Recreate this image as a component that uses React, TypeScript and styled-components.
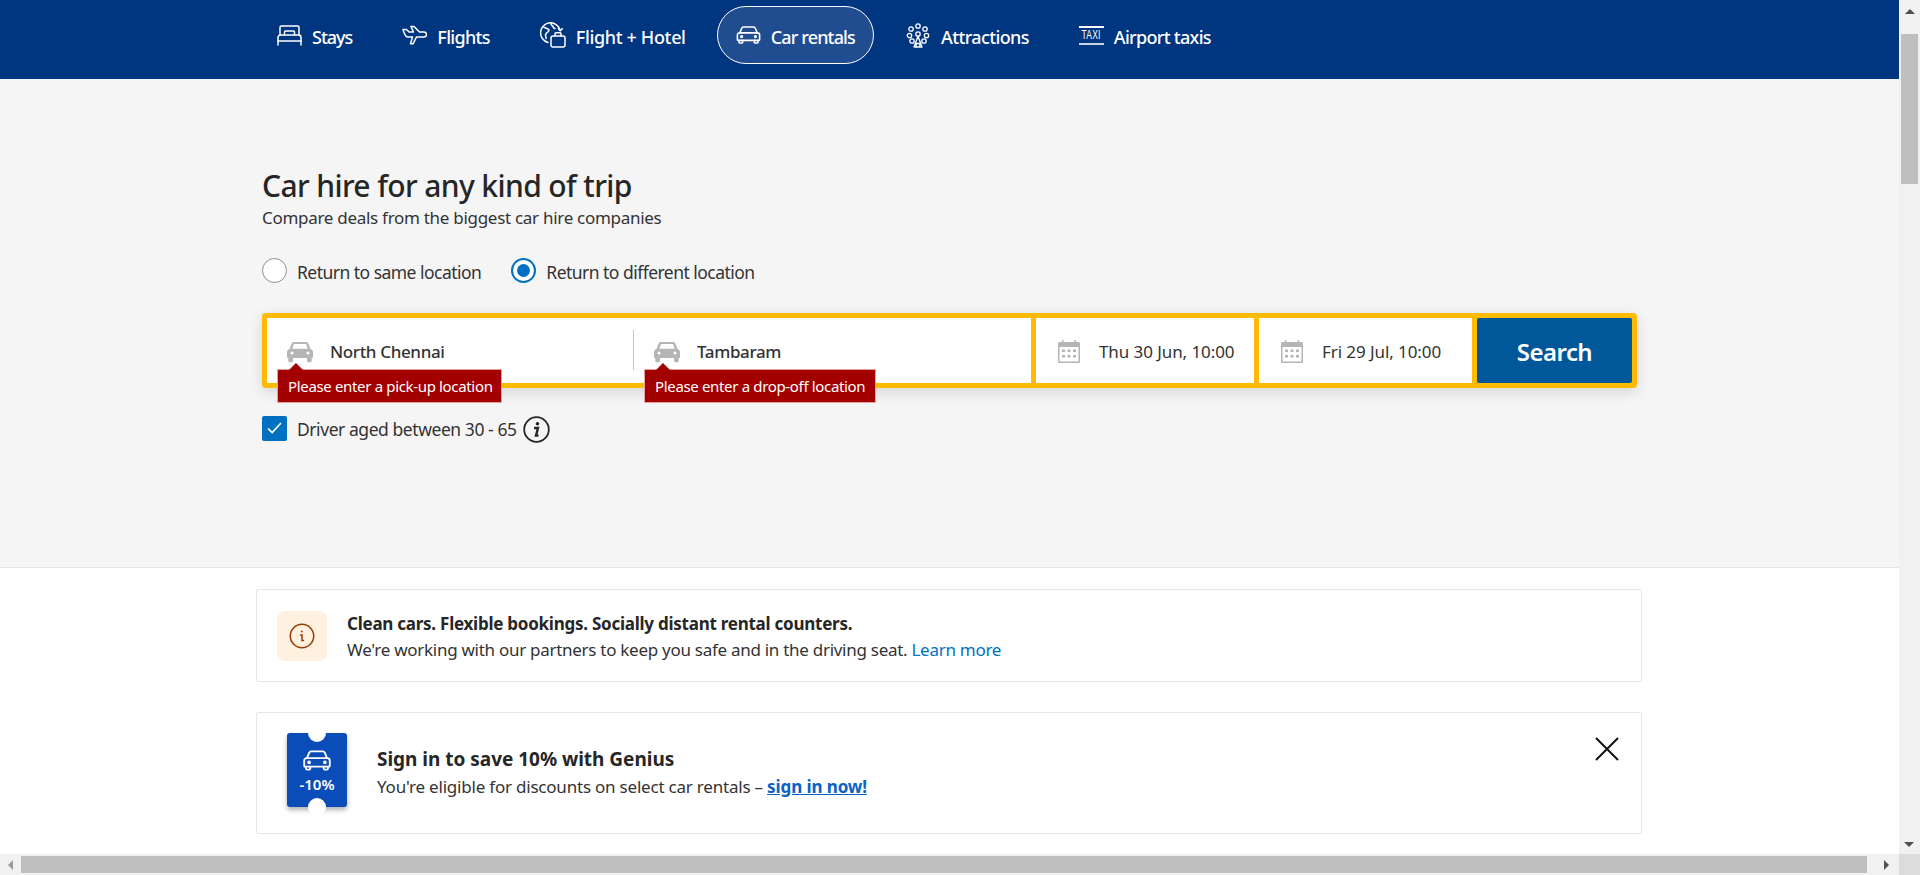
import React from 'react';
import styled, { createGlobalStyle } from 'styled-components';

const Global = createGlobalStyle`
  html, body { margin: 0; padding: 0; height: 100%; overflow: hidden; background: #fff; }
  * { box-sizing: border-box; }
  body { font-family: "Noto Sans", "Open Sans", "Liberation Sans", sans-serif; color: #262626; }
`;

const Frame = styled.div`
  width: 1920px; height: 875px; display: grid;
  grid-template-columns: 1899px 21px; grid-template-rows: 854px 21px;
`;
const Viewport = styled.main`overflow: hidden; background: #fff;`;
const VBar = styled.div`
  background: #f1f1f1; display: flex; flex-direction: column; align-items: center; padding-top: 9px; position: relative;
`;
const HBar = styled.div`
  background: #f1f1f1; display: flex; align-items: center; border-top: 2px solid #f1f1f1; border-bottom: 2px solid #f1f1f1;
`;
const Corner = styled.div`background: #dcdcdc;`;
const Thumb = styled.div<{ $v?: boolean }>`
  background: #bfbfbf;
  ${p => p.$v ? 'width: 17px; height: 150px; margin-top: 20px;' : 'height: 17px; width: 1846px;'}
`;
const ArrowV = styled.span<{ $down?: boolean }>`
  width: 0; height: 0; border-left: 5px solid transparent; border-right: 5px solid transparent;
  ${p => p.$down
    ? 'border-top: 5px solid #505050; position: absolute; bottom: 7px; left: 5px;'
    : 'border-bottom: 5px solid #505050;'}
`;
const ArrowH = styled.span<{ $right?: boolean }>`
  width: 0; height: 0; border-top: 5px solid transparent; border-bottom: 5px solid transparent; flex: none;
  ${p => p.$right
    ? 'border-left: 5px solid #505050; margin-left: 17px;'
    : 'border-right: 5px solid #9a9a9a; margin: 0 8px;'}
`;

const Header = styled.header`
  height: 79px; background: #003580; padding: 6px 0 0 258px; display: flex; gap: 12px; align-items: flex-start;
`;
const NavItem = styled.a<{ $active?: boolean }>`
  height: 58px; padding: 0 18px; display: flex; align-items: center; gap: 10px;
  border-radius: 29px; color: #fff; font-size: 18px; font-weight: 500;
  border: 1px solid ${p => p.$active ? '#fff' : 'transparent'};
  background: ${p => p.$active ? 'rgba(255,255,255,.12)' : 'transparent'};
  svg { display: block; flex: none; }
`;
const NavLabel = styled.span<{ $ls: number }>`margin-top: 4px; letter-spacing: ${p => p.$ls}px;`;
const TaxiMark = styled.span`
  width: 25px; height: 19px; border-top: 2px solid #fff; border-bottom: 2px solid #c9d4e6; color: #fff;
  display: flex; align-items: center; justify-content: center; flex: none; overflow: hidden; margin-top: 1px;
`;
const TaxiLetters = styled.span`
  font: 400 12.5px/1 "Liberation Sans", sans-serif; letter-spacing: 0.3px; transform: scaleX(.68);
`;

const Hero = styled.section`
  height: 489px; background: #f5f5f5; border-bottom: 1px solid #e6e6e6; padding: 84px 0 0 262px;
`;
const Title = styled.h1`
  margin: 0; font-size: 30px; line-height: 46px; font-weight: 500; color: #262626; letter-spacing: -0.62px;
`;
const Subtitle = styled.p`
  margin: -2px 0 0; font-size: 17px; line-height: 22px; color: #333; letter-spacing: -0.29px;
`;
const RadioRow = styled.div`display: flex; margin-top: 29px; height: 25px;`;
const RadioOption = styled.label`
  display: flex; align-items: center; gap: 10px; font-size: 17.5px; letter-spacing: -0.53px; color: #333; margin-right: 30px;
`;
const OptionText = styled.span`margin-top: 2px;`;
const RadioCircle = styled.span<{ $on?: boolean }>`
  width: 25px; height: 25px; border-radius: 50%; background: #fff; flex: none; display: flex; align-items: center; justify-content: center;
  border: ${p => p.$on ? '2px solid #0071c2' : '1px solid #8e8e8e'};
  &::after { content: ''; width: 13px; height: 13px; border-radius: 50%; background: ${p => p.$on ? '#0071c2' : 'transparent'}; }
`;
const SearchBox = styled.div`
  margin-top: 30px; width: 1375px; height: 75px; background: #febb02; border-radius: 4px; padding: 5px; display: flex; gap: 5px;
  box-shadow: 0 4px 14px rgba(0,0,0,.13);
`;
const LocationGroup = styled.div`width: 764px; background: #fff; display: flex; align-items: stretch;`;
const LocationField = styled.div<{ $w: number; $divider?: boolean }>`
  width: ${p => p.$w}px; position: relative; display: flex; align-items: center; gap: 17px; padding: 2px 0 0 20px;
  font-size: 17px; font-weight: 500; letter-spacing: -0.36px; color: #333;
  ${p => p.$divider ? `&::after { content: ''; position: absolute; right: 0; top: 12px; height: 40px; width: 1px; background: #c4c4c4; }` : ''}
`;
const Tooltip = styled.div<{ $w: number }>`
  position: absolute; left: 10px; top: 51px; width: ${p => p.$w}px; height: 34px; background: #a30000; border: 1px solid #e5a0a0; border-radius: 1px;
  color: #fff; font-size: 15px; font-weight: 400; letter-spacing: -0.34px; padding-left: 10px; display: flex; align-items: center; z-index: 2; white-space: nowrap;
  &::before { content: ''; position: absolute; left: 11px; top: -7px; width: 0; height: 0; border-left: 7px solid transparent; border-right: 7px solid transparent; border-bottom: 7px solid #a30000; }
`;
const DateField = styled.div<{ $w: number }>`
  width: ${p => p.$w}px; background: #fff; display: flex; align-items: center; gap: 19px; padding: 2px 0 0 22px;
  font-size: 17px; letter-spacing: -0.08px; color: #333; white-space: nowrap;
`;
const SearchButton = styled.button`
  width: 155px; border: 0; border-radius: 2px; background: #00589b; color: #fff; font: 600 24px "Noto Sans", sans-serif; letter-spacing: -0.55px; padding: 2px 0 0;
`;
const DriverRow = styled.div`
  margin-top: 26px; display: flex; align-items: center; gap: 10px; font-size: 17.5px; letter-spacing: -0.44px; color: #333; height: 28px;
`;
const DriverInfo = styled.span`margin: 2px 0 0 -4px; display: block; height: 27px;`;
const Check = styled.span`
  width: 25px; height: 25px; background: #0071c2; border-radius: 2px; display: flex; align-items: center; justify-content: center; flex: none;
`;

const Cards = styled.section`padding: 21px 0 0 256px;`;
const Card = styled.article<{ $h: number; $pad: number; $gap: number }>`
  width: 1386px; height: ${p => p.$h}px; border: 1px solid #e6e6e6; border-radius: 2px; background: #fff; position: relative;
  display: flex; align-items: center; padding-left: ${p => p.$pad}px; gap: ${p => p.$gap}px; margin-bottom: 30px;
`;
const CardBody = styled.div<{ $lh: number; $top: number }>`
  line-height: ${p => p.$lh}px; padding-top: ${p => p.$top}px;
`;
const InfoTile = styled.div`
  width: 50px; height: 50px; border-radius: 8px; background: #fff0e0; display: flex; align-items: center; justify-content: center; flex: none;
`;
const CardTitle = styled.div<{ $large?: boolean }>`
  font-size: ${p => p.$large ? '19px' : '17px'}; font-weight: 700;
  letter-spacing: ${p => p.$large ? '-0.02px' : '-0.25px'}; color: #262626;
`;
const CardText = styled.div<{ $ls: number }>`font-size: 17px; letter-spacing: ${p => p.$ls}px; color: #333;`;
const LearnLink = styled.a`color: #0071c2;`;
const SignInLink = styled.a`color: #0a62c4; font-weight: 700; text-decoration: underline; letter-spacing: -0.1px;`;
const Ticket = styled.div`
  width: 60px; height: 74px; background: #0a4cb8; border-radius: 3px; position: relative; flex: none; color: #fff; margin-bottom: 6px;
  display: flex; flex-direction: column; align-items: center; padding-top: 17px; gap: 5px;
  box-shadow: 0 3px 5px rgba(0,0,0,.3);
  font-size: 15px; font-weight: 600; letter-spacing: 0;
  &::before, &::after { content: ''; position: absolute; left: 21px; width: 18px; height: 18px; border-radius: 50%; background: #fff; }
  &::before { top: -9px; } &::after { bottom: -9px; }
`;
const TicketLabel = styled.span`line-height: 16px;`;
const CloseBtn = styled.button`
  position: absolute; right: 22px; top: 24px; width: 24px; height: 24px; padding: 0; border: 0; background: none; display: block;
`;

const Ic = { fill: 'none', stroke: '#fff', strokeWidth: 1.5, strokeLinecap: 'round' as const, strokeLinejoin: 'round' as const };

const BedIcon = () => (
  <svg width="25" height="21" viewBox="0 0 25 21" {...Ic}>
    <path d="M3 10V2.500A1.500 1.500 0 0 1 4.500 1h16A1.500 1.500 0 0 1 22 2.500V10" />
    <path d="M7.500 10V7a1 1 0 0 1 1-1h8a1 1 0 0 1 1 1v3" />
    <path d="M1 20v-7.500A2.500 2.500 0 0 1 3.500 10h18a2.500 2.500 0 0 1 2.500 2.500V20" />
    <path d="M1 16h23" />
  </svg>
);
const PlaneIcon = () => (
  <svg width="25" height="20" viewBox="0 0 25 20" {...Ic}>
    <path d="M1 4.500h3.500L7 7h4.500L9 1.500h3l5.500 5.500h4.500a2.400 2.400 0 0 1 0 5H14.500l-3.500 6.800H8.500L10.500 12H5.500C3.500 12 2.500 9.500 1 4.500z" />
  </svg>
);
const GlobeBagIcon = () => (
  <svg width="26" height="26" viewBox="0 0 26 26" {...Ic}>
    <path d="M8 20.500A10 10 0 1 1 20.300 8.500" />
    <path d="M18.300 6.800l2 2 2-2" />
    <path d="M3 4.500c2 2 5.500 1.500 6 3.500s-3.500 2-3.500 5c0 1.500 1 2 .5 3.500" />
    <path d="M11 1c-.5 2 1.500 2.500 2 3.500s.5 2 2 2" />
    <rect x="11" y="14" width="14" height="11" rx="2" />
    <path d="M15 14v-2.200a1 1 0 0 1 1-1h4a1 1 0 0 1 1 1V14" />
  </svg>
);
const CarIcon = ({ w = 25, h = 18 }: { w?: number; h?: number }) => (
  <svg width={w} height={h} viewBox="0 0 23 17" {...Ic}>
    <path d="M3.300 6.500 5 2.300A2 2 0 0 1 6.800 1h9.400A2 2 0 0 1 18 2.300l1.700 4.200" />
    <path d="M3 6.500h17a2 2 0 0 1 2 2V13a.6.6 0 0 1-.6.6H1.600A.6.6 0 0 1 1 13V8.500a2 2 0 0 1 2-2z" />
    <path d="M2.500 13.600V15a1 1 0 0 0 1 1h1.500a1 1 0 0 0 1-1v-1.400M17 13.600V15a1 1 0 0 0 1 1h1.500a1 1 0 0 0 1-1v-1.400" />
    <circle cx="5" cy="10" r=".8" /><circle cx="18" cy="10" r=".8" />
  </svg>
);
const FerrisIcon = () => (
  <svg width="26" height="25" viewBox="0 0 26 25" {...Ic} strokeWidth={1.3}>
    <circle cx="13" cy="3" r="2.200" /><circle cx="6" cy="6" r="2.200" /><circle cx="20" cy="6" r="2.200" />
    <circle cx="4.500" cy="12.500" r="2.200" /><circle cx="21.500" cy="12.500" r="2.200" />
    <circle cx="7" cy="18" r="2.200" /><circle cx="19" cy="18" r="2.200" /><circle cx="13" cy="11" r="2.200" />
    <path d="M13 13.200 9 24h8zM11.200 24v-3.500h3.600V24" />
  </svg>
);
const SolidCar = () => (
  <svg width="26" height="22" viewBox="0 0 26 22" style={{ flex: 'none', display: 'block' }}>
    <path fill="#b5b5b5" d="M6.800 1h12.400c1 0 1.800.6 2.200 1.500L23.500 8c1.500.5 2.500 1.600 2.500 3.200V16c0 .5-.4 1-1 1h-.3v3c0 .7-.5 1.200-1.200 1.200h-2.300c-.7 0-1.200-.5-1.200-1.200v-3H6v3c0 .7-.5 1.200-1.200 1.200H2.500c-.7 0-1.200-.5-1.200-1.200v-3H1c-.6 0-1-.5-1-1v-4.800C0 9.600 1 8.500 2.500 8l2.100-5.500C5 1.600 5.800 1 6.800 1z" />
    <path fill="#fff" d="M7 3h12l1.800 4.800H5.200z" />
    <circle cx="5" cy="12" r="1.500" fill="#fff" /><circle cx="21" cy="12" r="1.500" fill="#fff" />
  </svg>
);
const CalendarIcon = () => (
  <svg width="22" height="23" viewBox="0 0 22 23" style={{ flex: 'none', display: 'block' }}>
    <path fill="#b5b5b5" d="M4 0h1.500v2h11V0H18v2h2.500A1.500 1.500 0 0 1 22 3.500v18a1.500 1.500 0 0 1-1.500 1.500h-19A1.500 1.500 0 0 1 0 21.500v-18A1.500 1.500 0 0 1 1.500 2H4z" />
    <rect x="1.500" y="7" width="19" height="14.500" fill="#fff" />
    <g fill="#b5b5b5">
      <rect x="4" y="9.500" width="3" height="2.500" /><rect x="9.500" y="9.500" width="3" height="2.500" /><rect x="15" y="9.500" width="3" height="2.500" />
      <rect x="4" y="15" width="3" height="2.500" /><rect x="9.500" y="15" width="3" height="2.500" /><rect x="15" y="15" width="3" height="2.500" />
    </g>
  </svg>
);
const CheckMark = () => (
  <svg width="15" height="12" viewBox="0 0 15 12" fill="none" stroke="#fff" strokeWidth="1.700"><path d="M1 6.500 5.200 10.500 14 1" /></svg>
);
const InfoCircle = () => (
  <svg width="27" height="27" viewBox="0 0 27 27" fill="none" stroke="#262626" strokeWidth="1.800">
    <circle cx="13.500" cy="13.500" r="12.300" />
    <circle cx="14.500" cy="7.800" r="1.800" fill="#262626" stroke="none" />
    <path d="M11 12h4l-2 7.500h2.500" strokeWidth="2.400" />
  </svg>
);
const OrangeInfo = () => (
  <svg width="26" height="26" viewBox="0 0 26 26" fill="none" stroke="#923e01" strokeWidth="1.500">
    <circle cx="13" cy="13" r="11.700" /><circle cx="12.800" cy="8.500" r=".9" fill="#923e01" stroke="none" />
    <path d="M11.500 12h1.500v5.500h1.500" strokeLinecap="round" />
  </svg>
);
const CloseIcon = () => (
  <svg width="24" height="24" viewBox="0 0 24 24" fill="none" stroke="#111" strokeWidth="2"><path d="M1 1l22 22M23 1 1 23" /></svg>
);

export default function App() {
  return (
    <>
      <Global />
      <Frame>
        <Viewport>
          <Header>
            <NavItem><BedIcon /><NavLabel $ls={-1}>Stays</NavLabel></NavItem>
            <NavItem><PlaneIcon /><NavLabel $ls={-0.7}>Flights</NavLabel></NavItem>
            <NavItem><GlobeBagIcon /><NavLabel $ls={-0.35}>Flight + Hotel</NavLabel></NavItem>
            <NavItem $active><CarIcon /><NavLabel $ls={-0.85}>Car rentals</NavLabel></NavItem>
            <NavItem><FerrisIcon /><NavLabel $ls={-0.63}>Attractions</NavLabel></NavItem>
            <NavItem><TaxiMark><TaxiLetters>TAXI</TaxiLetters></TaxiMark><NavLabel $ls={-0.7}>Airport taxis</NavLabel></NavItem>
          </Header>
          <Hero>
            <Title>Car hire for any kind of trip</Title>
            <Subtitle>Compare deals from the biggest car hire companies</Subtitle>
            <RadioRow>
              <RadioOption><RadioCircle /><OptionText>Return to same location</OptionText></RadioOption>
              <RadioOption><RadioCircle $on /><OptionText>Return to different location</OptionText></RadioOption>
            </RadioRow>
            <SearchBox>
              <LocationGroup>
                <LocationField $w={367} $divider>
                  <SolidCar />North Chennai
                  <Tooltip $w={225}>Please enter a pick-up location</Tooltip>
                </LocationField>
                <LocationField $w={397}>
                  <SolidCar />Tambaram
                  <Tooltip $w={232}>Please enter a drop-off location</Tooltip>
                </LocationField>
              </LocationGroup>
              <DateField $w={218}><CalendarIcon />Thu 30 Jun, 10:00</DateField>
              <DateField $w={213}><CalendarIcon />Fri 29 Jul, 10:00</DateField>
              <SearchButton>Search</SearchButton>
            </SearchBox>
            <DriverRow>
              <Check><CheckMark /></Check><OptionText>Driver aged between 30 - 65</OptionText><DriverInfo><InfoCircle /></DriverInfo>
            </DriverRow>
          </Hero>
          <Cards>
            <Card $h={93} $pad={20} $gap={20}>
              <InfoTile><OrangeInfo /></InfoTile>
              <CardBody $lh={26} $top={2}>
                <CardTitle>Clean cars. Flexible bookings. Socially distant rental counters.</CardTitle>
                <CardText $ls={-0.28}>We're working with our partners to keep you safe and in the driving seat. <LearnLink>Learn more</LearnLink></CardText>
              </CardBody>
            </Card>
            <Card $h={122} $pad={30} $gap={30}>
              <Ticket>
                <CarIcon w={28} h={21} />
                <TicketLabel>-10%</TicketLabel>
              </Ticket>
              <CardBody $lh={28} $top={0}>
                <CardTitle $large>Sign in to save 10% with Genius</CardTitle>
                <CardText $ls={-0.21}>You're eligible for discounts on select car rentals – <SignInLink>sign in now!</SignInLink></CardText>
              </CardBody>
              <CloseBtn><CloseIcon /></CloseBtn>
            </Card>
          </Cards>
        </Viewport>
        <VBar><ArrowV /><Thumb $v /><ArrowV $down /></VBar>
        <HBar><ArrowH /><Thumb /><ArrowH $right /></HBar>
        <Corner />
      </Frame>
    </>
  );
}
